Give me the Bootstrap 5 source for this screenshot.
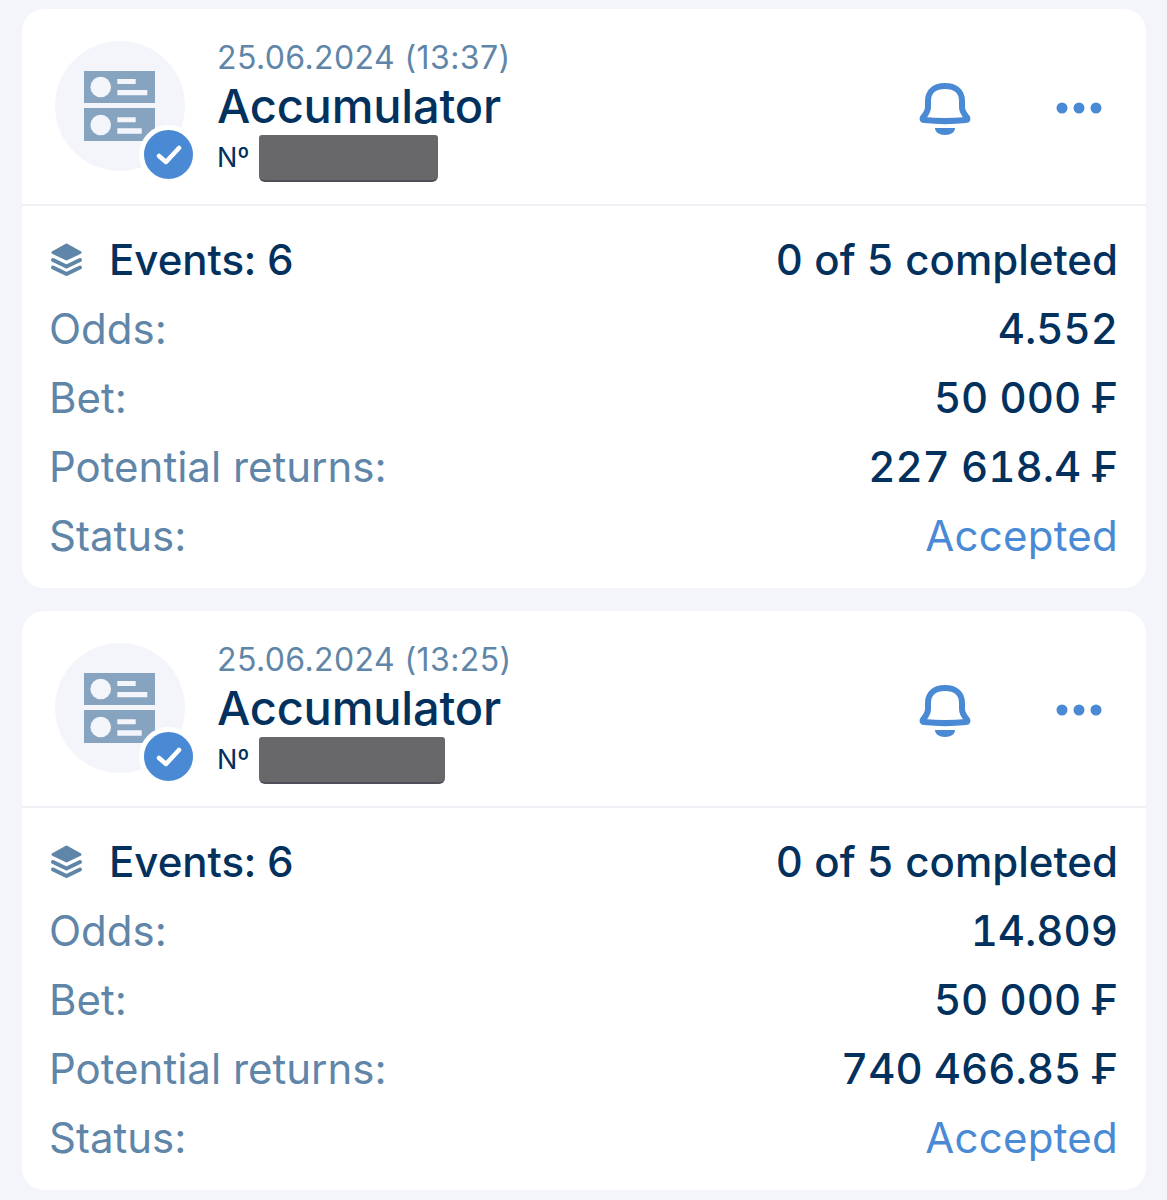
<!DOCTYPE html>
<html lang="en">
<head>
    <meta charset="UTF-8">
    <meta name="viewport" content="width=device-width, initial-scale=1.0">
    <title>Bet history</title>
    <link rel="stylesheet" href="https://cdn.jsdelivr.net/npm/bootstrap@5.3.0/dist/css/bootstrap.min.css">
    <style>
        body {
            background-color: #f3f5fa;
            font-family: Inter, "Liberation Sans", sans-serif;
            color: #03315e;
            width: 1167px;
            height: 1200px;
            overflow: hidden;
        }
        .bets-wrap {
            padding: 9px 21px 0 22px;
            gap: 23px;
        }
        .bet-card {
            background: #fff;
            border-radius: 22px;
            height: 579px;
        }
        .bet-head {
            height: 197px;
            border-bottom: 2px solid #eef0f5;
            padding-left: 33px;
            padding-right: 44px;
        }
        .type-circle {
            width: 130px;
            height: 130px;
            border-radius: 50%;
            background: #f3f5fa;
            margin-top: 32px;
        }
        .type-circle svg { display: block; }
        .ok-badge {
            position: absolute;
            left: 84px;
            top: 84px;
            width: 59px;
            height: 59px;
            border-radius: 50%;
            background: #4a8ad4;
            border: 5px solid #fff;
        }
        .bet-title-col {
            margin-left: 32px;
            padding-top: 28px;
        }
        .bet-date {
            font-size: 32px;
            line-height: 42px;
            color: #5f86a8;
            letter-spacing: 0.4px;
        }
        .bet-name {
            font-size: 47px;
            font-weight: 500;
            line-height: 54px;
            letter-spacing: -0.2px;
        }
        .bet-no {
            font-size: 27px;
            line-height: 48px;
            gap: 9px;
            padding-top: 1px;
        }
        .no-hidden {
            height: 47px;
            background: #68686b;
            border-bottom: 2px solid #4d5059;
            border-radius: 3px 3px 6px 6px;
            margin-top: 1px;
        }
        .no-a { width: 179px; }
        .no-b { width: 186px; }
        .head-icons {
            gap: 84px;
            padding-top: 72px;
        }
        .bet-body {
            padding: 19px 28px 0 27px;
        }
        .bet-row {
            height: 69px;
            font-size: 42px;
        }
        .row-label { color: #5f86a8; }
        .row-strong { font-weight: 500; font-variant-numeric: tabular-nums; }
        .row-accept { color: #4a8ad4; letter-spacing: 0.25px; }
        .events-label { gap: 25px; }
    </style>
</head>
<body>

<div class="d-flex flex-column bets-wrap">

    <!-- first bet -->
    <div class="bet-card">
        <div class="bet-head d-flex">
            <div class="type-circle position-relative flex-shrink-0">
                <svg width="130" height="130" viewBox="0 0 130 130">
                    <path fill="#86a3bf" d="M29 30h71v32H29zM29 67h71v33H29z"/>
                    <g fill="#f3f5fa">
                        <circle cx="45.700" cy="46" r="10.300"/><circle cx="45.700" cy="84" r="10.300"/>
                        <path d="M62.300 38h18.400v5H62.300zM62.300 49h30v5.300h-30zM62.300 76.300h18.400v5H62.300zM62.300 87.300h24.400v5.400H62.300z"/>
                    </g>
                </svg>
                <div class="ok-badge d-flex align-items-center justify-content-center">
                    <svg width="26" height="22" viewBox="0 0 26 22"><path d="M3 12l7 6L23 4" fill="none" stroke="#fff" stroke-width="4.500" stroke-linecap="round" stroke-linejoin="round"/></svg>
                </div>
            </div>
            <div class="bet-title-col flex-grow-1">
                <div class="bet-date">25.06.2024 (13:37)</div>
                <div class="bet-name">Accumulator</div>
                <div class="bet-no d-flex align-items-center"><span>Nº</span><span class="no-hidden no-a"></span></div>
            </div>
            <div class="head-icons d-flex">
                <svg width="54" height="56" viewBox="0 0 54 56"><path d="M10 20C10 10 17 5 27 5s17 5 17 15v6c0 5 3 8 5 10.500 1 1.500.5 2.500-1 2.500-14 1.500-28 1.500-42 0-1.500 0-2-1-1-2.500C7 34 10 31 10 26z" fill="none" stroke="#4a8ad4" stroke-width="6" stroke-linejoin="round"/><path d="M17 47h20c0 4-4 7-10 7s-10-3-10-7z" fill="#4a8ad4"/></svg>
                <svg class="mt-1" width="46" height="46" viewBox="0 0 46 46"><g fill="#4a8ad4"><circle cx="6" cy="23" r="5.500"/><circle cx="23" cy="23" r="5.500"/><circle cx="40" cy="23" r="5.500"/></g></svg>
            </div>
        </div>
        <div class="bet-body">
            <div class="bet-row d-flex justify-content-between align-items-center row-strong">
                <div class="d-flex align-items-center events-label">
                    <svg width="35" height="35" viewBox="0 0 35 35"><path fill="#5f86a8" stroke="#5f86a8" stroke-width="3" stroke-linejoin="round" d="M17.500 3L31 10.500 17.500 17 4 10.500z"/><path d="M4 18l13.500 6.500L31 18M4 25.500L17.500 32 31 25.500" fill="none" stroke="#5f86a8" stroke-width="4" stroke-linecap="round" stroke-linejoin="round"/></svg>
                    <span>Events: 6</span>
                </div>
                <span>0 of 5 completed</span>
            </div>
            <div class="bet-row d-flex justify-content-between align-items-center"><span class="row-label">Odds:</span><span class="row-strong">4.552</span></div>
            <div class="bet-row d-flex justify-content-between align-items-center"><span class="row-label">Bet:</span><span class="row-strong">50 000 ₣</span></div>
            <div class="bet-row d-flex justify-content-between align-items-center"><span class="row-label">Potential returns:</span><span class="row-strong">227 618.4 ₣</span></div>
            <div class="bet-row d-flex justify-content-between align-items-center"><span class="row-label">Status:</span><span class="row-accept">Accepted</span></div>
        </div>
    </div>

    <!-- second bet -->
    <div class="bet-card">
        <div class="bet-head d-flex">
            <div class="type-circle position-relative flex-shrink-0">
                <svg width="130" height="130" viewBox="0 0 130 130">
                    <path fill="#86a3bf" d="M29 30h71v32H29zM29 67h71v33H29z"/>
                    <g fill="#f3f5fa">
                        <circle cx="45.700" cy="46" r="10.300"/><circle cx="45.700" cy="84" r="10.300"/>
                        <path d="M62.300 38h18.400v5H62.300zM62.300 49h30v5.300h-30zM62.300 76.300h18.400v5H62.300zM62.300 87.300h24.400v5.400H62.300z"/>
                    </g>
                </svg>
                <div class="ok-badge d-flex align-items-center justify-content-center">
                    <svg width="26" height="22" viewBox="0 0 26 22"><path d="M3 12l7 6L23 4" fill="none" stroke="#fff" stroke-width="4.500" stroke-linecap="round" stroke-linejoin="round"/></svg>
                </div>
            </div>
            <div class="bet-title-col flex-grow-1">
                <div class="bet-date">25.06.2024 (13:25)</div>
                <div class="bet-name">Accumulator</div>
                <div class="bet-no d-flex align-items-center"><span>Nº</span><span class="no-hidden no-b"></span></div>
            </div>
            <div class="head-icons d-flex">
                <svg width="54" height="56" viewBox="0 0 54 56"><path d="M10 20C10 10 17 5 27 5s17 5 17 15v6c0 5 3 8 5 10.500 1 1.500.5 2.500-1 2.500-14 1.500-28 1.500-42 0-1.500 0-2-1-1-2.500C7 34 10 31 10 26z" fill="none" stroke="#4a8ad4" stroke-width="6" stroke-linejoin="round"/><path d="M17 47h20c0 4-4 7-10 7s-10-3-10-7z" fill="#4a8ad4"/></svg>
                <svg class="mt-1" width="46" height="46" viewBox="0 0 46 46"><g fill="#4a8ad4"><circle cx="6" cy="23" r="5.500"/><circle cx="23" cy="23" r="5.500"/><circle cx="40" cy="23" r="5.500"/></g></svg>
            </div>
        </div>
        <div class="bet-body">
            <div class="bet-row d-flex justify-content-between align-items-center row-strong">
                <div class="d-flex align-items-center events-label">
                    <svg width="35" height="35" viewBox="0 0 35 35"><path fill="#5f86a8" stroke="#5f86a8" stroke-width="3" stroke-linejoin="round" d="M17.500 3L31 10.500 17.500 17 4 10.500z"/><path d="M4 18l13.500 6.500L31 18M4 25.500L17.500 32 31 25.500" fill="none" stroke="#5f86a8" stroke-width="4" stroke-linecap="round" stroke-linejoin="round"/></svg>
                    <span>Events: 6</span>
                </div>
                <span>0 of 5 completed</span>
            </div>
            <div class="bet-row d-flex justify-content-between align-items-center"><span class="row-label">Odds:</span><span class="row-strong">14.809</span></div>
            <div class="bet-row d-flex justify-content-between align-items-center"><span class="row-label">Bet:</span><span class="row-strong">50 000 ₣</span></div>
            <div class="bet-row d-flex justify-content-between align-items-center"><span class="row-label">Potential returns:</span><span class="row-strong">740 466.85 ₣</span></div>
            <div class="bet-row d-flex justify-content-between align-items-center"><span class="row-label">Status:</span><span class="row-accept">Accepted</span></div>
        </div>
    </div>

</div>

</body>
</html>
